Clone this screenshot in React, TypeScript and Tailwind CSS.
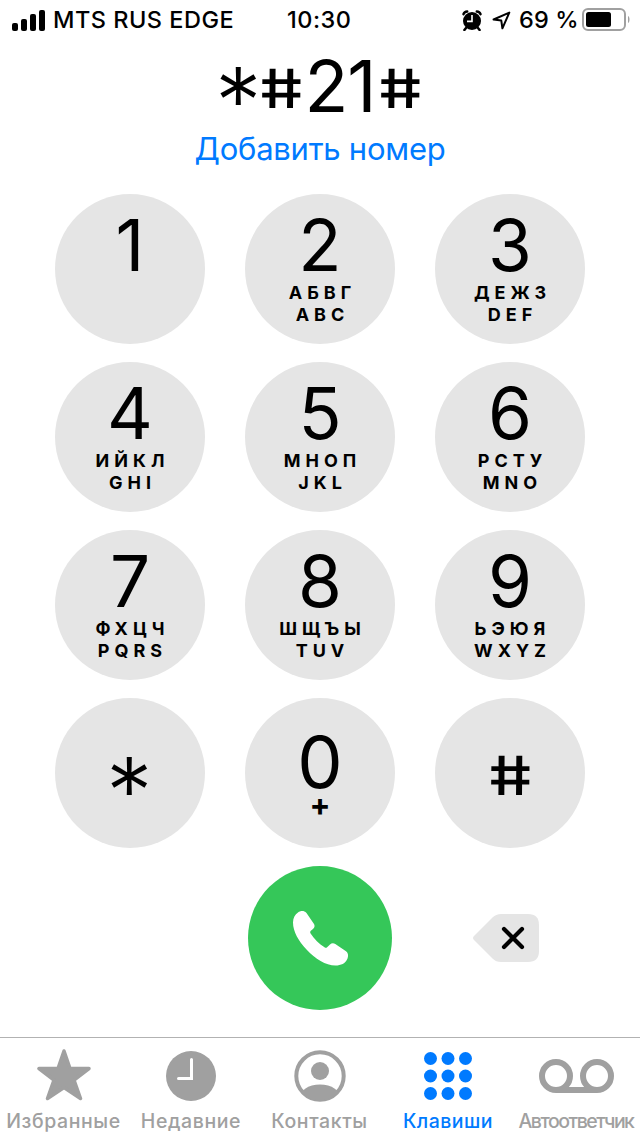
import clsx from "clsx";

const keys = [
  { digit: "1", ru: "", en: "" },
  { digit: "2", ru: "АБВГ", en: "ABC" },
  { digit: "3", ru: "ДЕЖЗ", en: "DEF" },
  { digit: "4", ru: "ИЙКЛ", en: "GHI" },
  { digit: "5", ru: "МНОП", en: "JKL" },
  { digit: "6", ru: "РСТУ", en: "MNO" },
  { digit: "7", ru: "ФХЦЧ", en: "PQRS" },
  { digit: "8", ru: "ШЩЪЫ", en: "TUV" },
  { digit: "9", ru: "ЬЭЮЯ", en: "WXYZ" },
];

const keyClass =
  "w-[150px] h-[150px] rounded-full bg-[#e5e5e5] flex flex-col items-center cursor-pointer";

const Star = () => (
  <span className="inline-block w-[42px] text-center text-[93px] leading-[87px] font-[350] translate-y-[23px] -indent-[3px]">
    *
  </span>
);

const Hash = () => (
  <span className="inline-block w-[43px] text-center text-[54px] leading-[54px] font-[450] -translate-y-1 scale-x-128 skew-x-[9deg]">
    #
  </span>
);

const StatusBar = () => (
  <div className="h-10 flex items-center text-[23.5px] leading-10 font-medium tracking-[0.5px]">
    <svg className="ml-3 w-[33px] h-[21px]" viewBox="0 0 33 21">
      <rect x="0" y="13" width="6" height="8" rx="2" />
      <rect x="9" y="9" width="6" height="12" rx="2" />
      <rect x="18" y="4" width="6" height="17" rx="2" />
      <rect x="27" y="0" width="6" height="21" rx="2" />
    </svg>
    <div className="ml-2 w-[234px] whitespace-nowrap">MTS RUS EDGE</div>
    <div className="w-[175px]">10:30</div>
    <svg className="w-[20px] h-[21px]" viewBox="0 0 20 21">
      <circle cx="10" cy="11" r="9" />
      <path
        d="M1.500 4.200A4 4 0 0 1 5.200 1.500M18.500 4.200A4 4 0 0 0 14.800 1.500M4 18L2.400 20M16 18l1.600 2"
        fill="none"
        stroke="black"
        strokeWidth="2.500"
        strokeLinecap="round"
      />
      <path d="M10 5V11.400H5" fill="none" stroke="white" strokeWidth="1.600" />
    </svg>
    <svg className="ml-2.5 w-[19px] h-[19px]" viewBox="0 0 19 19">
      <path
        d="M17.300 1.600L1.600 8.500L9.300 9.600L10.400 17.300Z"
        fill="none"
        stroke="black"
        strokeWidth="2"
        strokeLinejoin="round"
      />
    </svg>
    <div className="ml-2 w-[63px] whitespace-nowrap tracking-[0.1px]">69 %</div>
    <svg className="w-[49px] h-[24px]" viewBox="0 0 49 24">
      <rect
        x="1"
        y="1"
        width="42"
        height="21"
        rx="5"
        fill="none"
        stroke="#a0a0a0"
        strokeWidth="2"
      />
      <rect x="4" y="4" width="25" height="15" rx="2.5" />
      <path d="M46 8c2 .8 2 6.200 0 7z" fill="#a0a0a0" />
    </svg>
  </div>
);

const tabs = [
  {
    label: "Избранные",
    text: "tracking-[0.6px]",
    icon: (
      <path
        d="M27 3L33 20.500L52 20.500L37 32L43.500 50.500L27 39.500L10.500 50.500L17 32L2 20.500L21 20.500Z"
        fill="currentColor"
        stroke="currentColor"
        strokeWidth="3.500"
        strokeLinejoin="round"
      />
    ),
    size: "w-[54px]",
    box: "0 0 54 54",
  },
  {
    label: "Недавние",
    text: "tracking-[0.6px]",
    icon: (
      <>
        <circle cx="25" cy="28" r="25" fill="currentColor" />
        <path
          d="M25.500 11.500V30.500H12.500"
          fill="none"
          stroke="white"
          strokeWidth="3"
          strokeLinecap="round"
        />
      </>
    ),
    size: "w-[50px]",
    box: "0 0 50 54",
  },
  {
    label: "Контакты",
    text: "tracking-[0.6px]",
    icon: (
      <>
        <clipPath id="person">
          <circle cx="26" cy="28" r="24" />
        </clipPath>
        <circle
          cx="26"
          cy="28"
          r="23.700"
          fill="none"
          stroke="currentColor"
          strokeWidth="4"
        />
        <g clipPath="url(#person)" fill="currentColor">
          <circle cx="26" cy="23" r="9" />
          <ellipse cx="26" cy="51" rx="21" ry="14.500" />
        </g>
      </>
    ),
    size: "w-[52px]",
    box: "0 0 52 54",
  },
  {
    label: "Клавиши",
    text: "tracking-[0.5px]",
    icon: (
      <g fill="currentColor">
        {[6.5, 24, 41.5].map((x) =>
          [10.5, 28, 45.5].map((y) => (
            <circle key={`${x}-${y}`} cx={x} cy={y} r="6.500" />
          ))
        )}
      </g>
    ),
    size: "w-[48px]",
    box: "0 0 48 54",
  },
  {
    label: "Автоответчик",
    text: "tracking-[-1.5px]",
    icon: (
      <g fill="none" stroke="currentColor" strokeWidth="6">
        <circle cx="17" cy="28" r="14" />
        <circle cx="58" cy="28" r="14" />
        <path d="M17 42H58" />
      </g>
    ),
    size: "w-[75px]",
    box: "0 0 75 54",
  },
];

const App = () => {
  return (
    <div className="w-[640px] h-[1136px] bg-white text-black flex flex-col overflow-hidden font-['Inter',sans-serif]">
      <StatusBar />
      <div className="h-[96px] -mt-[5px] mb-[5px] flex justify-center items-baseline text-[72px] leading-[70px]">
        <Star />
        <Hash />
        <span className="w-[76px] text-center tracking-[-1px] -indent-[2px]">
          21
        </span>
        <Hash />
      </div>
      <div className="h-[58px] text-center text-[31px] leading-[26px] tracking-[-0.25px] text-[#007aff]">
        Добавить номер
      </div>

      <div className="grid grid-cols-[150px_150px_150px] gap-x-10 gap-y-[18px] justify-center">
        {keys.map((k) => (
          <button key={k.digit} className={clsx(keyClass, "pt-4")}>
            <span className="text-[71px] leading-[71px]">{k.digit}</span>
            <span className="mt-px pl-[5px] text-[18px] leading-[22px] font-bold tracking-[5px]">
              {k.ru}
            </span>
            <span className="pl-[5px] text-[18px] leading-[22px] font-bold tracking-[5px]">
              {k.en}
            </span>
          </button>
        ))}
        <button className={clsx(keyClass, "pt-[27px]")}>
          <Star />
        </button>
        <button className={clsx(keyClass, "pt-[29px]")}>
          <span className="text-[72px] leading-[70px]">0</span>
          <span className="-mt-[3px] text-[31px] leading-[22px] font-bold">
            +
          </span>
        </button>
        <button className={clsx(keyClass, "pt-[55px]")}>
          <Hash />
        </button>
      </div>

      <div className="mt-[18px] grid grid-cols-[150px_150px_150px] gap-x-10 justify-center items-center">
        <button className="col-start-2 justify-self-center w-36 h-36 rounded-full bg-[#35c759] flex items-center justify-center">
          <svg className="w-14 h-14" viewBox="0 0 56 56">
            <path
              d="M6 2.500C8.500 .6 12 .3 14.500 3L22 14C23 16 22.600 17.500 21 19L18.800 20.800C18 21.700 18 22.500 18.600 23.400C22.300 29 27 33.500 32.500 37.300C33.500 38 34.300 38 35.100 37.200L38 34.500C39.500 33 41.500 32.800 43.300 34L54 41.200C56.200 42.900 56.500 45.500 55.500 48.500C53.500 53.500 49 55.500 43.500 55.500C33.500 55.500 23.500 49 14.500 39.500C6.500 31 1 21.500 1 12.500C1 8 3 4.500 6 2.500Z"
              fill="white"
            />
          </svg>
        </button>
        <button className="justify-self-center">
          <svg className="w-[66px] h-12 -translate-x-1" viewBox="0 0 66 48">
            <path
              d="M28 0H55Q66 0 66 11V37Q66 48 55 48H28Q23 48 19.500 44.500L1 26Q-1 24 1 22L19.500 3.500Q23 0 28 0Z"
              fill="#e5e5e5"
            />
            <path
              d="M31 15L49 33M49 15L31 33"
              stroke="black"
              strokeWidth="4.200"
              strokeLinecap="round"
            />
          </svg>
        </button>
      </div>

      <div className="mt-auto h-[99px] border-t border-[#b2b2b2] pt-[10px] grid grid-cols-[127px_128px_129px_128px_128px]">
        {tabs.map((tab) => (
          <div
            key={tab.label}
            className={clsx(
              "flex flex-col items-center",
              tab.label === "Клавиши" ? "text-[#007aff]" : "text-[#a0a0a0]"
            )}
          >
            <svg className={clsx(tab.size, "h-[54px]")} viewBox={tab.box}>
              {tab.icon}
            </svg>
            <span
              className={clsx(
                "mt-[7px] text-[19.5px] leading-6 font-medium whitespace-nowrap",
                tab.text
              )}
            >
              {tab.label}
            </span>
          </div>
        ))}
      </div>
    </div>
  );
};

export default App;
